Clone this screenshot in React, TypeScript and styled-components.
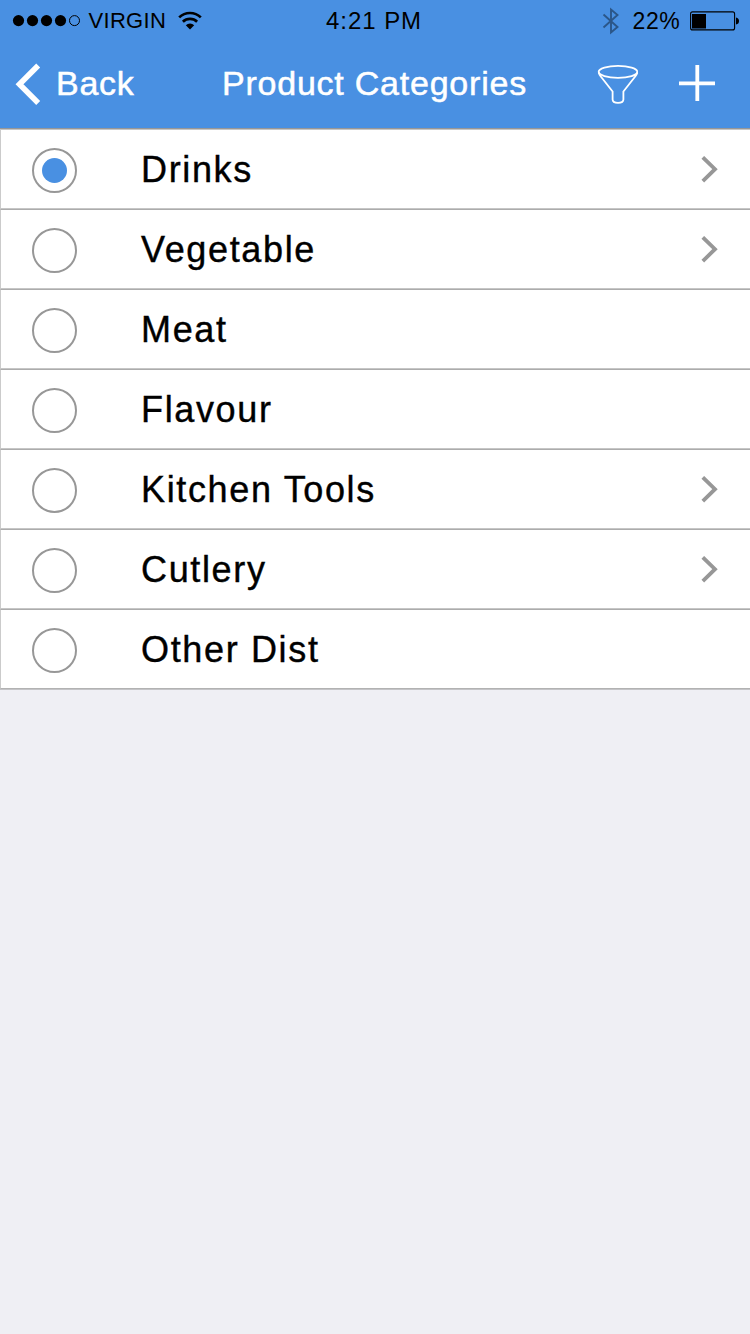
import React from "react";
import styled, { createGlobalStyle } from "styled-components";

const GlobalStyle = createGlobalStyle`
  * { box-sizing: border-box; }
  body { margin: 0; background: #efeff4; font-family: "Liberation Sans", Arial, Helvetica, sans-serif; }
`;

const Screen = styled.div`
  width: 750px;
  height: 1334px;
  background: #efeff4;
  display: flex;
  flex-direction: column;
  overflow: hidden;
`;

const Header = styled.header`
  height: 128px;
  background: #4990e2;
  display: flex;
  flex-direction: column;
`;

const StatusBar = styled.div`
  height: 40px;
  display: grid;
  grid-template-columns: 326px 1fr 150px;
  color: #000;
`;

const StatusGroup = styled.div`
  display: flex;
  align-items: center;
`;

const StatusText = styled.span<{ $size: number; $spacing: number }>`
  font-size: ${(p) => p.$size}px;
  letter-spacing: ${(p) => p.$spacing}px;
  line-height: 40px;
  padding-top: 1px;
  white-space: nowrap;
`;

const SignalIcon = styled.svg`
  margin: 0 7.5px 0 12px;
`;

const WifiIcon = styled.svg`
  margin-left: 12px;
`;

const BluetoothIcon = styled.svg`
  margin: 0 12.5px 0 2px;
`;

const BatteryIcon = styled.svg`
  margin-left: 10px;
`;

const NavBar = styled.nav`
  height: 88px;
  display: grid;
  grid-template-columns: 222px 1fr 154px;
  align-items: center;
`;

const NavText = styled.span<{ $spacing: number }>`
  color: #fff;
  font-size: 34px;
  line-height: 86px;
  height: 88px;
  letter-spacing: ${(p) => p.$spacing}px;
  -webkit-text-stroke: 0.5px #fff;
  white-space: nowrap;
`;

const BackButton = styled.div`
  display: flex;
  align-items: center;
  gap: 15px;
  padding-left: 15px;
`;

const Actions = styled.div`
  display: flex;
  align-items: center;
  gap: 40px;
`;

const List = styled.ul`
  list-style: none;
  margin: 0;
  padding: 0;
  border-top: 1px solid #979797;
  border-bottom: 1px solid #c4c4c7;
`;

const Row = styled.li`
  height: 80px;
  display: flex;
  align-items: center;
  background: #fff;
  border-left: 1px solid #cbcbcb;
  border-top: 1px solid #acacac;
  border-bottom: 1px solid #c6c6c6;
  padding: 2px 32px 0 31px;

  &:first-child { border-top-color: #c6c6c6; }
  &:last-child { border-bottom-color: #b2b2b2; }
`;

const Radio = styled.span`
  width: 45px;
  height: 45px;
  border: 2px solid #979797;
  border-radius: 50%;
  display: flex;
  align-items: center;
  justify-content: center;
`;

const RadioDot = styled.span`
  width: 25px;
  height: 25px;
  border-radius: 50%;
  background: #4990e2;
`;

const RowLabel = styled.span`
  flex: 1;
  margin-left: 64px;
  font-size: 36px;
  line-height: 76px;
  letter-spacing: 1.65px;
  color: #000;
  -webkit-text-stroke: 0.4px #000;
`;

const categories = [
  { name: "Drinks", selected: true, nested: true },
  { name: "Vegetable", selected: false, nested: true },
  { name: "Meat", selected: false, nested: false },
  { name: "Flavour", selected: false, nested: false },
  { name: "Kitchen Tools", selected: false, nested: true },
  { name: "Cutlery", selected: false, nested: true },
  { name: "Other Dist", selected: false, nested: false },
];

const Chevron = () => (
  <svg width="17" height="28" viewBox="0 0 17 28" fill="none">
    <path d="M1.8 1.3 14 13.2 1.8 25.1" stroke="#979797" strokeWidth="3.8" />
  </svg>
);

export default function App() {
  return (
    <Screen>
      <GlobalStyle />
      <Header>
        <StatusBar>
          <StatusGroup>
            <SignalIcon width="69" height="12" viewBox="0 0 69 12">
              {[6.5, 20.5, 34.5, 48.5].map((x) => (
                <circle key={x} cx={x} cy="5.6" r="5.6" />
              ))}
              <circle cx="62.5" cy="5.6" r="5" fill="none" stroke="#000" />
            </SignalIcon>
            <StatusText $size={22} $spacing={0.3}>VIRGIN</StatusText>
            <WifiIcon width="24" height="20" viewBox="0 0 24 20" fill="none" stroke="#000" strokeWidth="2.7">
              <path d="M1.2 6.4a15.5 15.5 0 0 1 21.6 0M4.9 10.7a10.2 10.2 0 0 1 14.2 0" />
              <path d="M7.8 14.2a6 6 0 0 1 8.4 0L12 18.4Z" fill="#000" stroke="none" />
            </WifiIcon>
          </StatusGroup>
          <StatusGroup>
            <StatusText $size={24} $spacing={0.95}>4:21 PM</StatusText>
          </StatusGroup>
          <StatusGroup>
            <BluetoothIcon width="18" height="28" viewBox="0 0 18 28" fill="none" stroke="#2b5688" strokeWidth="1.9">
              <path d="M1.5 7.5 15.5 20 9 25.5V2.5L15.5 8 1.5 20.5" />
            </BluetoothIcon>
            <StatusText $size={23} $spacing={0.6}>22%</StatusText>
            <BatteryIcon width="50" height="20" viewBox="0 0 50 20">
              <rect x="0.6" y="0.9" width="44" height="18" rx="2" fill="none" stroke="#000" strokeWidth="1.1" />
              <rect x="2" y="3" width="14" height="14.5" />
              <path d="M46 6.5q3 .5 3 3.5t-3 3.5Z" />
            </BatteryIcon>
          </StatusGroup>
        </StatusBar>
        <NavBar>
          <BackButton>
            <svg width="26" height="42" viewBox="0 0 26 42" fill="none">
              <path d="M23.2 2.5 4.5 21.2 23.2 39.9" stroke="#fff" strokeWidth="5.6" />
            </svg>
            <NavText $spacing={0.75}>Back</NavText>
          </BackButton>
          <NavText $spacing={0.77}>Product Categories</NavText>
          <Actions>
            <svg width="42" height="40" viewBox="0 0 42 40" fill="none" stroke="#fff" strokeWidth="1.8">
              <ellipse cx="22" cy="7.8" rx="19.3" ry="6" />
              <path d="M2.7 8.5C3.2 10.5 4 11.5 5 12.8L16.6 27.5V35.5c0 4.5 10.8 4.5 10.8 0V27.5L39 12.8C40 11.5 40.8 10.5 41.3 8.5" />
            </svg>
            <svg width="38" height="38" viewBox="0 0 38 38" stroke="#fff" strokeWidth="3.8">
              <path d="M1 18.3h36M19.3 0v36" />
            </svg>
          </Actions>
        </NavBar>
      </Header>
      <List>
        {categories.map((c) => (
          <Row key={c.name}>
            <Radio>{c.selected && <RadioDot />}</Radio>
            <RowLabel>{c.name}</RowLabel>
            {c.nested && <Chevron />}
          </Row>
        ))}
      </List>
    </Screen>
  );
}
